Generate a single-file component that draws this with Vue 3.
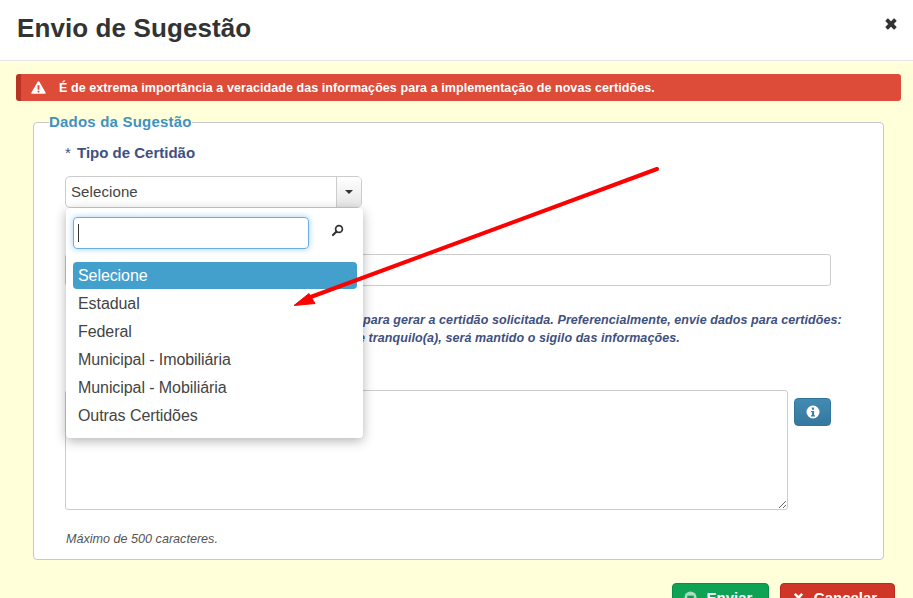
<script setup>
const options = ['Estadual', 'Federal', 'Municipal - Imobiliária', 'Municipal - Mobiliária', 'Outras Certidões']
</script>

<template>
  <div class="page">
    <header class="head">
      <h1>Envio de Sugestão</h1>
      <svg class="close" viewBox="1 1 10 10" width="12" height="12" aria-hidden="true">
        <path d="M1.800 3.400 3.400 1.800 6 4.400 8.600 1.800 10.200 3.400 7.600 6 10.200 8.600 8.600 10.200 6 7.600 3.400 10.200 1.800 8.600 4.400 6Z" fill="#333" stroke="#333" stroke-width=".9" stroke-linejoin="round" />
      </svg>
    </header>

    <main class="body">
      <div class="alert">
        <svg class="warn" viewBox="0 0 16 14" width="15" height="13" aria-hidden="true">
          <path fill-rule="evenodd" d="M8 .4c.4 0 .7.2.9.5l6.700 11.400c.4.7-.1 1.500-.9 1.500H1.300c-.8 0-1.300-.8-.9-1.500L7.100.9C7.300.6 7.600.4 8 .4ZM6.900 4.600l.2 4.800h1.800l.2-4.800ZM7 10.400v2h2v-2Z" fill="#fff" />
        </svg>
        <span>É de extrema importância a veracidade das informações para a implementação de novas certidões.</span>
      </div>

      <fieldset class="box">
        <legend>Dados da Sugestão</legend>
        <label class="lbl"><span class="star">*</span> Tipo de Certidão</label>
        <div class="select">
          <span class="value">Selecione</span>
          <span class="caret-box"><i class="caret"></i></span>
        </div>

        <div class="wide-input"></div>

        <p class="hint">
          <span class="h1">para gerar a certidão solicitada. Preferencialmente, envie dados para certidões:</span>
          <span class="h2">e tranquilo(a), será mantido o sigilo das informações.</span>
        </p>

        <div class="area-row">
          <textarea class="area"></textarea>
          <button class="info" type="button" aria-label="Informações">
            <svg viewBox="0 0 14 14" width="14" height="14" aria-hidden="true">
              <path fill-rule="evenodd" d="M7 .5a6.500 6.500 0 1 1 0 13 6.500 6.500 0 0 1 0-13ZM5.900 2.600v2.100h2.200V2.600ZM5 5.900v1.200h.9v3.200H5v1.200h4v-1.200h-.9V5.900Z" fill="#fff" />
            </svg>
          </button>
        </div>
        <p class="max">Máximo de 500 caracteres.</p>
      </fieldset>

      <div class="actions">
        <button class="btn ok" type="button">
          <svg viewBox="0 0 14 14" width="13" height="13" aria-hidden="true">
            <circle cx="7" cy="7" r="6.500" fill="#a9dcc0" />
            <path d="M3.500 5h7v5h-7Z" fill="#0e9a55" />
          </svg>
          Enviar
        </button>
        <button class="btn no" type="button">
          <svg viewBox="1 1 10 10" width="11" height="11" aria-hidden="true">
            <path d="M1.800 3.400 3.400 1.800 6 4.400 8.600 1.800 10.200 3.400 7.600 6 10.200 8.600 8.600 10.200 6 7.600 3.400 10.200 1.800 8.600 4.400 6Z" fill="#fff" />
          </svg>
          Cancelar
        </button>
      </div>
    </main>

    <div class="menu">
      <div class="search-row">
        <div class="search"><i class="cursor"></i></div>
        <svg class="lens" viewBox="0 0 13 13" width="13" height="13" aria-hidden="true">
          <circle cx="8" cy="5" r="3.400" fill="none" stroke="#333" stroke-width="1.700" />
          <path d="M5.500 7.500 2 11" stroke="#333" stroke-width="2.200" stroke-linecap="round" />
        </svg>
      </div>
      <ul class="list">
        <li class="sel">Selecione</li>
        <li v-for="o in options" :key="o">{{ o }}</li>
      </ul>
    </div>

    <svg class="arrow" viewBox="0 0 913 598" width="913" height="598" aria-hidden="true">
      <path d="M657 169 308 298" stroke="#fd0000" stroke-width="4" stroke-linecap="round" fill="none" />
      <path d="M294 305.500 309 293.500 315 303.500Z" fill="#fd0000" stroke="#fd0000" stroke-linejoin="round" />
    </svg>
  </div>
</template>

<style>
html, body { margin: 0; background: #fff; }
</style>

<style scoped>
.page {
  position: relative;
  width: 913px;
  height: 598px;
  overflow: hidden;
  font-family: "Liberation Sans", Arial, sans-serif;
  color: #333;
}
.head {
  height: 61px;
  box-sizing: border-box;
  border-bottom: 1px solid #e5e5e5;
  padding: 0 17px;
  display: flex;
  justify-content: space-between;
  align-items: flex-start;
  background: #fff;
}
.head h1 {
  margin: 13px 0 0;
  font-size: 26px;
  line-height: 30px;
  font-weight: 700;
  letter-spacing: .1px;
  color: #333;
}
.close { margin: 18px 0 0; position: relative; left: 1px; }
.body {
  background: #ffffd9;
  height: 537px;
  box-sizing: border-box;
  padding: 13px 12px 0 16px;
}
.alert {
  height: 27px;
  box-sizing: border-box;
  background: #dd4b39;
  border-left: 5px solid #b93423;
  border-radius: 3px;
  color: #fff;
  font-size: 12.5px;
  letter-spacing: .07px;
  font-weight: 700;
  display: flex;
  align-items: center;
  padding-left: 10px;
  gap: 13px;
}
.box {
  margin: 13px 17px 0 17px;
  padding: 0 52px 0 31px;
  height: 446px;
  box-sizing: border-box;
  background: #fff;
  border: 1px solid #c8c8c8;
  border-radius: 4px;
  min-width: 0;
  position: relative;
}
legend {
  padding: 0;
  margin-left: -16px;
  color: #3f92bd;
  font-size: 15px;
  line-height: 16px;
  font-weight: 700;
  letter-spacing: .2px;
}
.lbl {
  display: block;
  margin: 14px 0 0 0;
  color: #40507f;
  font-size: 15px;
  line-height: 18px;
  font-weight: 700;
}
.star { font-weight: 400; margin-right: 2px; }
.select {
  margin-top: 14px;
  width: 297px;
  height: 32px;
  box-sizing: border-box;
  border: 1px solid #ccc;
  border-radius: 5px;
  display: flex;
  align-items: center;
  justify-content: space-between;
  font-size: 15px;
  letter-spacing: .1px;
  color: #444;
  padding-left: 5px;
  overflow: hidden;
}
.value { margin-top: -2px; }
.caret-box {
  width: 24px;
  height: 100%;
  border-left: 1px solid #ccc;
  background: linear-gradient(#fff, #e6e6e6);
  display: flex;
  align-items: center;
  justify-content: center;
}
.caret {
  width: 0;
  height: 0;
  border-left: 4px solid transparent;
  border-right: 4px solid transparent;
  border-top: 4px solid #333;
}
.wide-input {
  margin-top: 46px;
  height: 32px;
  box-sizing: border-box;
  border: 1px solid #ccc;
  border-radius: 3px;
}
.hint {
  margin: 25px -30px 0 0;
  color: #40507f;
  font-size: 12.5px;
  letter-spacing: .08px;
  line-height: 18px;
  font-weight: 700;
  font-style: italic;
  white-space: nowrap;
}
.hint span { display: block; }
.hint .h1 { padding-left: 298px; }
.hint .h2 { padding-left: 293px; }
.area-row {
  margin-top: 43px;
  display: flex;
  align-items: flex-start;
  gap: 6px;
}
.area {
  width: 723px;
  height: 120px;
  box-sizing: border-box;
  border: 1px solid #ccc;
  border-radius: 3px;
  margin: 0;
  outline: none;
  display: block;
  background: #fff;
}
.info {
  margin-top: 8px;
  width: 37px;
  height: 28px;
  padding: 0;
  border: 1px solid #32759c;
  border-radius: 4px;
  background: linear-gradient(#428bb3, #35779e);
  display: flex;
  align-items: center;
  justify-content: center;
}
.max {
  margin: 20px 0 0 1px;
  font-size: 12.6px;
  line-height: 18px;
  font-style: italic;
  color: #555;
}
.actions {
  margin-top: 23px;
  padding-right: 6px;
  display: flex;
  justify-content: flex-end;
  gap: 11px;
}
.btn {
  height: 32px;
  box-sizing: border-box;
  padding: 0 5px 3px 0;
  border-radius: 4px;
  color: #fff;
  font: 700 15px "Liberation Sans", Arial, sans-serif;
  display: flex;
  align-items: center;
  justify-content: center;
  gap: 10px;
}
.ok { width: 97px; background: #0ea255; border: 1px solid #0b8c49; }
.no { width: 115px; background: #cf3628; border: 1px solid #b82c20; }

.menu {
  position: absolute;
  left: 66px;
  top: 208px;
  width: 297px;
  height: 230px;
  box-sizing: border-box;
  background: #fff;
  border-radius: 4px;
  box-shadow: 0 3px 12px rgba(0, 0, 0, .3);
  padding: 9px 6px 0 7px;
}
.search-row {
  display: flex;
  align-items: center;
  justify-content: space-between;
  padding-right: 13px;
}
.search {
  width: 236px;
  height: 32px;
  box-sizing: border-box;
  border: 1px solid #66afe9;
  border-radius: 4px;
  box-shadow: 0 0 6px rgba(102, 175, 233, .6);
  display: flex;
  align-items: center;
  padding-left: 4px;
}
.cursor { width: 1px; height: 18px; background: #333; }
.lens { margin-top: -6px; }
.list {
  list-style: none;
  margin: 13px 0 0;
  padding: 0;
  font-size: 16px;
  letter-spacing: -.08px;
  color: #444;
}
.list li {
  height: 28px;
  line-height: 28px;
  padding-left: 5px;
  border-radius: 4px;
}
.list .sel { background: #43a0cd; color: #fff; height: 27px; line-height: 27px; margin-bottom: 1px; }
.arrow {
  position: absolute;
  left: 0;
  top: 0;
  pointer-events: none;
}
</style>
